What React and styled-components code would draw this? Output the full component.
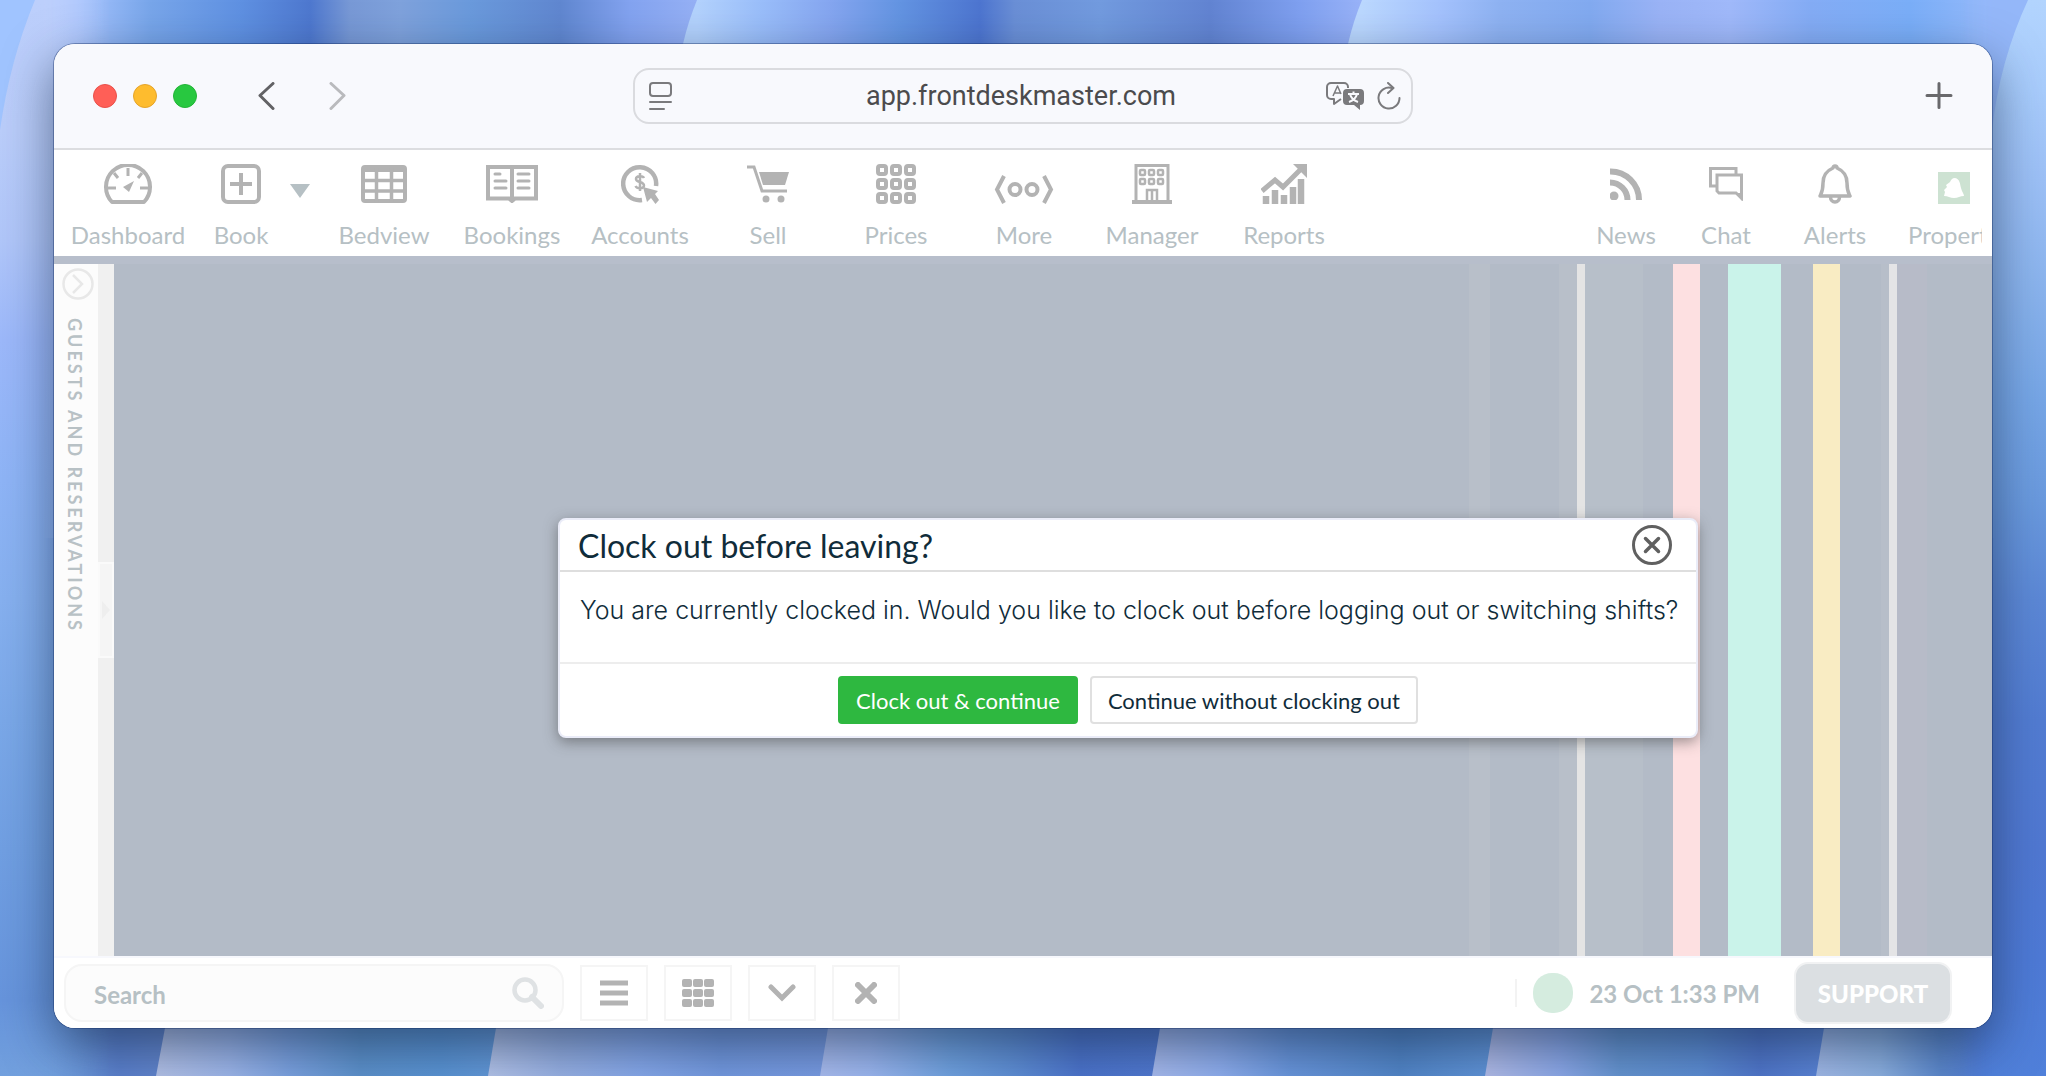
import React from "react";
import styled, { createGlobalStyle } from "styled-components";

const GlobalStyle = createGlobalStyle`
  *, *::before, *::after { box-sizing: border-box; }
  body { margin: 0; font-family: Lato, "Open Sans", sans-serif; }
  button, input { font: inherit; color: inherit; margin: 0; }
  button { padding: 0; border: 0; background: none; cursor: pointer; }
  svg { display: block; }
`;

/* ---------- desktop and window ---------- */

const Desktop = styled.div`
  position: relative;
  isolation: isolate;
  display: flex;
  min-height: 100vh;
  padding: 44px 54px 48px;
  overflow: hidden;
`;

const WallpaperSvg = styled.svg`
  position: absolute;
  inset: 0;
  z-index: -1;
  width: 100%;
  height: 100%;
`;

const Window = styled.main`
  flex: 1;
  min-width: 0;
  display: flex;
  flex-direction: column;
  overflow: hidden;
  border-radius: 21px;
  background: #fff;
  box-shadow: 0 0 0 1px rgba(20, 45, 100, 0.4), 0 18px 50px rgba(20, 40, 70, 0.6);
`;

const WindowBar = styled.header`
  display: grid;
  grid-template-columns: 1fr minmax(300px, 780px) 1fr;
  align-items: center;
  height: 106px;
  padding: 0 39px;
  border-bottom: 2px solid #dcdde0;
  background: #f8f9fd;
`;

const BarLeft = styled.div`
  display: flex;
  align-items: center;
`;

const BarRight = styled.div`
  display: flex;
  justify-content: flex-end;
`;

const Lights = styled.div`
  display: flex;
  gap: 16px;
  margin-right: 60px;
`;

const Light = styled.button`
  width: 24px;
  height: 24px;
  border-radius: 50%;
  border: 1px solid ${(p) => p.$edge};
  background: ${(p) => p.$fill};
`;

const HistoryButtons = styled.div`
  display: flex;
  gap: 54px;
`;

const AddressBar = styled.label`
  display: flex;
  align-items: center;
  gap: 12px;
  height: 56px;
  padding: 0 10px 0 14px;
  border: 2px solid #dadbdf;
  border-radius: 16px;
  color: #7a7a7d;
`;

const AddressInput = styled.input`
  flex: 1;
  min-width: 0;
  padding: 0 0 0 44px;
  border: 0;
  outline: 0;
  background: none;
  text-align: center;
  font-family: Roboto, Inter, sans-serif;
  font-size: 27px;
  color: #4b4b4d;
`;

/* ---------- navigation ---------- */

const Nav = styled.nav`
  display: flex;
  justify-content: space-between;
  height: 106px;
  padding: 0 10px;
  background: #fff;
`;

const NavGroup = styled.div`
  display: flex;
  flex: none;
`;

const ClippedGroup = styled(NavGroup)`
  width: 406px;
  overflow: hidden;
`;

const NavButton = styled.button`
  flex: none;
  display: flex;
  flex-direction: column;
  align-items: center;
  gap: 17px;
  width: ${(p) => p.$width || 128}px;
  padding-top: 14px;
  font-size: 24px;
  line-height: 28px;
  color: #b6c0c4;
`;

const IconBox = styled.span`
  display: flex;
  align-items: center;
  justify-content: center;
  height: 40px;
  color: #b3b3b3;
`;

const Caret = styled.button`
  flex: none;
  align-self: flex-start;
  width: 20px;
  margin: 34px 10px 0 0;
  color: #b6c0c4;
`;

/* ---------- body ---------- */

const NavRule = styled.div`
  height: 8px;
  background: #b7becb;
`;

const Body = styled.div`
  flex: 1;
  display: flex;
  min-height: 480px;
`;

const GuestPanel = styled.aside`
  display: flex;
  flex-direction: column;
  align-items: flex-end;
  gap: 18px;
  width: 44px;
  padding: 4px 4px 0 0;
  background: #fcfcfc;
`;

const PanelTitle = styled.h2`
  margin: 0;
  writing-mode: vertical-rl;
  font-size: 18px;
  line-height: 38px;
  font-weight: 700;
  letter-spacing: 3px;
  text-transform: uppercase;
  color: #b8c1c5;
`;

const Splitter = styled.div`
  display: flex;
  flex-direction: column;
  justify-content: center;
  width: 16px;
  background: #f0f0f0;
`;

const SplitterHandle = styled.button`
  display: flex;
  align-items: center;
  justify-content: center;
  height: 96px;
  border: 2px solid #fafafa;
  background: #f5f5f5;
  color: #eeeeee;
`;

const Stage = styled.section`
  position: relative;
  flex: 1;
  display: grid;
  place-items: center;
  padding: 36px 0 0 150px;
  background: #b3bbc7;
`;

const Stripes = styled.div`
  position: absolute;
  inset: 0;
  display: flex;
  justify-content: flex-end;
  padding-right: 65px;
  overflow: hidden;
`;

const Stripe = styled.span`
  flex: none;
  width: ${(p) => p.$width}px;
  background: ${(p) => p.$color};
`;

/* ---------- dialog ---------- */

const Dialog = styled.div`
  position: relative;
  width: 1140px;
  max-width: 96%;
  border: 2px solid #eaecf8;
  border-radius: 8px;
  background: #fff;
  color: #102c3a;
  box-shadow: 0 4px 14px rgba(60, 60, 60, 0.5);
`;

const DialogHeader = styled.header`
  display: flex;
  align-items: center;
  justify-content: space-between;
  height: 52px;
  padding: 0 24px 0 18px;
  border-bottom: 2px solid #dedede;
`;

const DialogTitle = styled.h1`
  margin: 0;
  padding-top: 2px;
  font-size: 32px;
  line-height: 40px;
  font-weight: 400;
`;

const DialogText = styled.p`
  margin: 0;
  height: 92px;
  padding: 22px 20px 0;
  border-bottom: 2px solid #ededed;
  font-family: Inter, "Liberation Sans", sans-serif;
  font-size: 25px;
  font-weight: 300;
  line-height: 32px;
  white-space: nowrap;
`;

const DialogFooter = styled.footer`
  display: flex;
  justify-content: center;
  gap: 12px;
  padding: 12px;
`;

const DialogButton = styled.button`
  height: 48px;
  padding: 2px 16px 0;
  border: 2px solid ${(p) => (p.$primary ? "#2eb840" : "#e0e0e0")};
  border-radius: 4px;
  background: ${(p) => (p.$primary ? "#2eb840" : "#fff")};
  color: ${(p) => (p.$primary ? "#fff" : "#102c3a")};
  font-size: 22px;
  line-height: 26px;
`;

/* ---------- bottom bar ---------- */

const BottomBar = styled.footer`
  display: flex;
  align-items: center;
  justify-content: space-between;
  height: 72px;
  padding: 0 40px 0 10px;
  border-top: 2px solid #f7f8fd;
  background: #fff;
  font-size: 24px;
  font-weight: 700;
  color: #b6c0c4;
`;

const Tools = styled.div`
  display: flex;
  align-items: center;
  gap: 16px;
`;

const SearchBox = styled.label`
  display: flex;
  align-items: center;
  width: 500px;
  height: 58px;
  padding: 0 18px 0 28px;
  border: 2px solid #f5f5f5;
  border-radius: 18px;
  background: #fcfcfc;
  color: #dfe2e4;
`;

const SearchInput = styled.input`
  flex: 1;
  min-width: 0;
  padding: 2px 0 0;
  border: 0;
  outline: 0;
  background: none;
  &::placeholder { color: #b6c0c4; opacity: 1; }
`;

const ToolButton = styled.button`
  display: flex;
  align-items: center;
  justify-content: center;
  width: 68px;
  height: 56px;
  border: 2px solid #f5f5f5;
  color: #b3b3b3;
`;

const Status = styled.div`
  display: flex;
  align-items: center;
  gap: 16px;
`;

const Divider = styled.span`
  width: 2px;
  height: 28px;
  background: #f3f3f3;
`;

const Presence = styled.span`
  width: 40px;
  height: 40px;
  border-radius: 19px;
  background: #d5ecdf;
`;

const SupportButton = styled.button`
  width: 158px;
  height: 62px;
  margin-left: 18px;
  border: 2px solid #f1f2f3;
  border-radius: 14px;
  background: #dbdfe2;
  color: #fff;
  font-weight: 900;
`;

/* ---------- drawings ---------- */

const stops = (list) =>
  list.map(([offset, color]) => <stop key={offset} offset={offset / 2046} stopColor={color} />);
const tall = (list) =>
  list.map(([offset, color]) => <stop key={offset} offset={offset / 1076} stopColor={color} />);

function Wallpaper() {
  return (
    <WallpaperSvg viewBox="0 0 2046 1076" preserveAspectRatio="none" aria-hidden="true">
      <defs>
        <linearGradient id="top" gradientUnits="userSpaceOnUse" x1="0" y1="0" x2="2046" y2="0">
          {stops([
            [0, "#b9cdfb"], [36, "#bccffc"], [75, "#a9c5ff"], [150, "#78a6ea"], [240, "#5f91e2"],
            [310, "#4e78cf"], [350, "#7899d6"], [400, "#7fa2dc"], [470, "#6a9adc"], [560, "#6087d0"],
            [630, "#83a3f0"], [696, "#95b0f5"],
          ])}
        </linearGradient>
        <linearGradient id="top2" gradientUnits="userSpaceOnUse" x1="0" y1="0" x2="2046" y2="0">
          {stops([
            [697, "#b3d2fd"], [760, "#9abefa"], [830, "#85a6f0"], [900, "#6394e2"], [980, "#4d75d0"],
            [1015, "#6a8fd6"], [1100, "#729bdf"], [1210, "#6284d2"], [1300, "#7fa0f0"], [1361, "#98b2f8"],
          ])}
        </linearGradient>
        <linearGradient id="top3" gradientUnits="userSpaceOnUse" x1="0" y1="0" x2="2046" y2="0">
          {stops([
            [1362, "#bbd8ff"], [1440, "#a4c2fd"], [1500, "#8eb2f2"], [1590, "#82aaf0"], [1660, "#9ab3f6"],
            [1730, "#a0b9fa"], [1810, "#84acf5"], [1910, "#7aaef8"], [1990, "#94b9fa"], [2028, "#a4c4fc"],
          ])}
        </linearGradient>
        {[
          ["b0", 0, [[0, "#79a8e6"], [60, "#6894d8"], [120, "#5b80cc"], [165, "#6285cc"]]],
          ["b1", 0, [[158, "#b4c2e8"], [230, "#9db6ea"], [290, "#7ba2e0"], [360, "#5d92cc"], [440, "#5a94d4"], [492, "#6298d8"]]],
          ["b2", 0, [[489, "#b4c4ea"], [560, "#98b1e4"], [640, "#86a8ea"], [720, "#749ae0"], [825, "#789be2"]]],
          ["b3", 0, [[822, "#aabdf0"], [870, "#9cb7f0"], [950, "#70a2e0"], [1010, "#6090d6"], [1080, "#4c74cc"], [1156, "#5078d0"]]],
          ["b4", 0, [[1153, "#a8bbee"], [1220, "#8faeee"], [1290, "#6996dc"], [1400, "#5286c8"], [1490, "#6094d8"]]],
          ["b5", 0, [[1486, "#b2bce8"], [1560, "#8ca8e8"], [1620, "#6594d0"], [1700, "#5c8cd2"], [1760, "#5076ca"], [1820, "#5a84d6"]]],
          ["b6", 0, [[1817, "#a2bae8"], [1880, "#8cb0e0"], [1940, "#5c88cc"], [1990, "#4e78d2"], [2046, "#5080da"]]],
        ].map(([id, y, list]) => (
          <linearGradient key={id} id={id} gradientUnits="userSpaceOnUse" x1="0" y1={y} x2="2046" y2={y}>
            {stops(list)}
          </linearGradient>
        ))}
        <linearGradient id="west" gradientUnits="userSpaceOnUse" x1="0" y1="0" x2="0" y2="1076">
          {tall([
            [0, "#bccffc"], [130, "#bacdfa"], [240, "#b0c6f9"], [340, "#9cb8fa"], [480, "#8eb4f6"],
            [600, "#86b0ef"], [720, "#7aa8e8"], [850, "#709fe2"], [1000, "#6694dc"], [1076, "#72a0de"],
          ])}
        </linearGradient>
        <linearGradient id="east" gradientUnits="userSpaceOnUse" x1="0" y1="0" x2="0" y2="1076">
          {tall([
            [0, "#b2d4fe"], [90, "#a8ccfc"], [180, "#9cc0f6"], [300, "#88b2ec"], [400, "#76a6e6"],
            [500, "#6a9ade"], [600, "#5c88d6"], [720, "#527cd2"], [850, "#5078d2"], [960, "#4e7ad6"], [1076, "#5080da"],
          ])}
        </linearGradient>
        <linearGradient id="fadeWest" x1="0" x2="1">
          <stop offset="0.4" stopColor="#fff" />
          <stop offset="1" stopColor="#000" />
        </linearGradient>
        <linearGradient id="fadeEast" x1="0" x2="1">
          <stop offset="0" stopColor="#000" />
          <stop offset="0.4" stopColor="#fff" />
        </linearGradient>
        <mask id="maskWest"><rect width="110" height="1076" fill="url(#fadeWest)" /></mask>
        <mask id="maskEast"><rect x="1960" width="86" height="1076" fill="url(#fadeEast)" /></mask>
      </defs>
      <rect width="2046" height="540" fill="url(#top)" />
      <path d="M697 0Q688 22 683 44L640 540H1400V0Z" fill="url(#top2)" />
      <path d="M1362 0Q1353 22 1348 44L1300 540H2046V0Z" fill="url(#top3)" />
      <rect y="538" width="2046" height="538" fill="url(#b0)" />
      <path d="M165 1028L156 1076H2046V538H200Z" fill="url(#b1)" />
      <path d="M496 1028L488 1076H2046V538H540Z" fill="url(#b2)" />
      <path d="M828 1028L820 1076H2046V538H880Z" fill="url(#b3)" />
      <path d="M1160 1028L1152 1076H2046V538H1210Z" fill="url(#b4)" />
      <path d="M1493 1028L1485 1076H2046V538H1540Z" fill="url(#b5)" />
      <path d="M1824 1028L1816 1076H2046V538H1880Z" fill="url(#b6)" />
      <rect width="110" height="1076" fill="url(#west)" mask="url(#maskWest)" />
      <path d="M0 0H35Q10 60 0 130Z" fill="#a0c4ff" />
      <g mask="url(#maskEast)">
        <rect x="1960" width="86" height="1076" fill="url(#east)" />
        <path d="M1960 0H2028Q2000 60 1992 130H1960Z" fill="#94b7f9" />
      </g>
    </WallpaperSvg>
  );
}

const Svg = ({ w, h, children, ...rest }) => (
  <svg width={w} height={h} viewBox={`0 0 ${w} ${h}`} fill="none" stroke="currentColor" aria-hidden="true" {...rest}>
    {children}
  </svg>
);

const DashboardIcon = () => (
  <Svg w={48} h={40} strokeWidth="4">
    <path d="M8 38A22 22 0 1 1 40 38Z" strokeLinejoin="round" />
    <path d="M24 4V12M4 24H12M36 24H44M10 9L14 14M38 9L34 14" strokeWidth="3" />
    <path d="M30 17L25 28L19 23Z" fill="currentColor" stroke="none" />
  </Svg>
);
const BookIcon = () => (
  <Svg w={40} h={40} strokeWidth="4">
    <rect x="2" y="2" width="36" height="36" rx="5" />
    <path d="M20 9V31M9 20H31" />
  </Svg>
);
const BedviewIcon = () => (
  <Svg w={46} h={38} strokeWidth="4">
    <rect x="2" y="2" width="42" height="34" rx="2" />
    <path d="M1 4H45" strokeWidth="6" />
    <path d="M1 15.500H45M1 26H45M15.500 3V37M30.500 3V37" strokeWidth="3.500" />
  </Svg>
);
const BookingsIcon = () => (
  <Svg w={52} h={38} strokeWidth="4">
    <path d="M2 2H50V33.500H29L26 36L23 33.500H2Z" />
    <path d="M26 2V35" />
    <path d="M9 9H14M9 16H20M9 23H20M32 9H43M32 16H43M32 23H43" strokeWidth="3" strokeLinecap="round" />
  </Svg>
);
const AccountsIcon = () => (
  <Svg w={38} h={40} strokeWidth="4.500">
    <path d="M35 22A16.500 16.500 0 1 0 21 36" />
    <path d="M23 14C22 11.500 15 11.500 15 15C15 19 23 17 23 21.500C23 25 16 25 14.500 22M19 9V27" strokeWidth="2.500" />
    <path d="M22 23L37 27L34 30L38 36L34.500 40L30 34L26 38Z" fill="currentColor" stroke="none" />
  </Svg>
);
const SellIcon = () => (
  <Svg w={42} h={38} strokeWidth="3">
    <path d="M0 2H7L15 26H40" />
    <path d="M12 7H42L38 20H16Z" fill="currentColor" stroke="none" />
    <circle cx="19" cy="34" r="3.500" fill="currentColor" stroke="none" />
    <circle cx="34" cy="34" r="3.500" fill="currentColor" stroke="none" />
  </Svg>
);
const PricesIcon = () => (
  <Svg w={40} h={40} strokeWidth="4">
    {[2, 16, 30].map((y) => [2, 16, 30].map((x) => <rect key={`${x}-${y}`} x={x} y={y} width="8" height="8" rx="2" />))}
  </Svg>
);
const MoreIcon = () => (
  <Svg w={60} h={40} strokeWidth="4">
    <path d="M10 12L3 25.500L10 39M50 12L57 25.500L50 39" />
    <circle cx="21" cy="25.500" r="5.500" />
    <circle cx="38" cy="25.500" r="5.500" />
  </Svg>
);
const ManagerIcon = () => (
  <Svg w={40} h={40} strokeWidth="3">
    <path d="M4 36V1.500H36V36" />
    <path d="M0 38H40" strokeWidth="4" />
    {[6, 15].map((y) => [8, 17, 26].map((x) => <rect key={`${x}-${y}`} x={x} y={y} width="5" height="5" rx="1" strokeWidth="2.500" />))}
    <path d="M15 36V26H25V36M20 26V36" strokeWidth="2.500" />
  </Svg>
);
const ReportsIcon = () => (
  <Svg w={46} h={40}>
    <path d="M1 27L14 16L22 23L40 5" strokeWidth="5" />
    <path d="M32 0H46V14Z" fill="currentColor" stroke="none" />
    <path d="M5 40V32M14 40V26M23 40V31M32 40V23M40 40V15" strokeWidth="6.500" />
  </Svg>
);
const NewsIcon = () => (
  <Svg w={32} h={32} strokeWidth="6">
    <circle cx="4" cy="28" r="4.500" fill="currentColor" stroke="none" />
    <path d="M0 14.500A17.500 17.500 0 0 1 17.500 32M0 3.500A28.500 28.500 0 0 1 29 32" />
  </Svg>
);
const ChatIcon = () => (
  <Svg w={34} h={34} strokeWidth="3">
    <path d="M7 19H1.500V1.500H27V7" />
    <path d="M8 8H32.500V31L27 26H10L8 24Z" />
    <path d="M26 26H33V34Z" fill="currentColor" stroke="none" />
  </Svg>
);
const AlertsIcon = () => (
  <Svg w={34} h={40} strokeWidth="3.500">
    <path d="M15 4A2 2 0 0 1 19 4C26 7 29 12 29 19C29 27 30 28 32 32H2C4 28 5 27 5 19C5 12 8 7 15 4Z" strokeLinejoin="round" />
    <path d="M12.500 33A4.500 5 0 0 0 21.500 33" />
  </Svg>
);
const PropertyIcon = () => (
  <Svg w={32} h={40} stroke="none">
    <rect y="8" width="32" height="32" fill="#cde2d2" />
    <path d="M17 14C22 15 22 20 23 24C24 28 26 30 26 32C22 32 20 34 16 34C12 34 10 32 6 32L7 28L6 26L9 23L8 21L12 18C13 16 14 14 17 14Z" fill="#fff" />
  </Svg>
);

const leftNav = [
  ["Bedview", BedviewIcon], ["Bookings", BookingsIcon], ["Accounts", AccountsIcon],
  ["Sell", SellIcon], ["Prices", PricesIcon], ["More", MoreIcon],
  ["Manager", ManagerIcon], ["Reports", ReportsIcon, 136],
];

const rightNav = [
  ["News", NewsIcon, 100], ["Chat", ChatIcon, 100], ["Alerts", AlertsIcon, 118], ["Property", PropertyIcon, 120],
];

const stripes = [
  [21, "#b8bfc9"], [69, "transparent"], [18, "#b8bfc9"], [8, "#e4e4e4"], [58, "#b7bfc9"], [30, "transparent"],
  [27, "#fde0e1"], [28, "transparent"], [53, "#caf3ea"], [32, "transparent"], [27, "#f9ecc3"],
  [41, "transparent"], [8, "#b7bec9"], [8, "#e4e4e6"], [30, "#b7bbc8"],
];

const NavItem = ({ label, icon: Icon, width }) => (
  <NavButton type="button" $width={width}>
    <IconBox><Icon /></IconBox>
    {label}
  </NavButton>
);

export default function App() {
  return (
    <Desktop>
      <GlobalStyle />
      <Wallpaper />
      <Window>
        <WindowBar>
          <BarLeft>
            <Lights>
              <Light type="button" aria-label="Close window" $fill="#ff5f57" $edge="#e9504a" />
              <Light type="button" aria-label="Minimise window" $fill="#febc2e" $edge="#e5a42a" />
              <Light type="button" aria-label="Zoom window" $fill="#28c840" $edge="#22b436" />
            </Lights>
            <HistoryButtons>
              <button type="button" aria-label="Back">
                <Svg w={18} h={28} strokeWidth="3" strokeLinecap="round" strokeLinejoin="round" color="#626265">
                  <path d="M16 1.500L3 13.500L16 26.500" />
                </Svg>
              </button>
              <button type="button" aria-label="Forward">
                <Svg w={18} h={28} strokeWidth="3" strokeLinecap="round" strokeLinejoin="round" color="#b9babd">
                  <path d="M2 1.500L15 13.500L2 26.500" />
                </Svg>
              </button>
            </HistoryButtons>
          </BarLeft>
          <AddressBar>
            <Svg w={23} h={28} strokeWidth="2" strokeLinecap="round">
              <rect x="1" y="1" width="21" height="13" rx="3" />
              <path d="M1 20H22M1 27H15" />
            </Svg>
            <AddressInput aria-label="Address" defaultValue="app.frontdeskmaster.com" />
            <Svg w={39} h={29} strokeWidth="2" strokeLinejoin="round">
              <path d="M15 17L8 22V17H5A4 4 0 0 1 1 13V5A4 4 0 0 1 5 1H18A4 4 0 0 1 22 5V6" />
              <path d="M7 14L11.500 4L15 12M8.500 11H14" strokeWidth="1.500" />
              <path d="M21 7H34A4 4 0 0 1 38 11V19A4 4 0 0 1 34 23V28L28 23H21A4 4 0 0 1 17 19V11A4 4 0 0 1 21 7Z" fill="currentColor" stroke="none" />
              <path d="M22 12H33M27.500 9.500V12M24 12C25 16 29 19 32 20M31 12C30 16 26 19 23 20" stroke="#f8f9fd" strokeWidth="2" />
            </Svg>
            <Svg w={24} h={28} strokeWidth="2" strokeLinecap="round" strokeLinejoin="round">
              <path d="M15 6A10.500 10.500 0 1 0 22.500 16" />
              <path d="M11 1L16.500 6L11 11" />
            </Svg>
          </AddressBar>
          <BarRight>
            <button type="button" aria-label="New tab">
              <Svg w={28} h={28} strokeWidth="3" strokeLinecap="round" color="#69696c">
                <path d="M14 1.500V25.500M2 13.500H26" />
              </Svg>
            </button>
          </BarRight>
        </WindowBar>

        <Nav>
          <NavGroup>
            <NavItem label="Dashboard" icon={DashboardIcon} />
            <NavItem label="Book" icon={BookIcon} width={98} />
            <Caret type="button" aria-label="Book options">
              <Svg w={20} h={14} stroke="none">
                <path d="M0 0H20L10 14Z" fill="currentColor" />
              </Svg>
            </Caret>
            {leftNav.map(([label, icon, width]) => (
              <NavItem key={label} label={label} icon={icon} width={width} />
            ))}
          </NavGroup>
          <ClippedGroup>
            {rightNav.map(([label, icon, width]) => (
              <NavItem key={label} label={label} icon={icon} width={width} />
            ))}
          </ClippedGroup>
        </Nav>
        <NavRule />

        <Body>
          <GuestPanel>
            <button type="button" aria-label="Expand guests and reservations">
              <Svg w={32} h={32} strokeWidth="2.500" color="#e8e8e8">
                <circle cx="16" cy="16" r="14.500" />
                <path d="M11 7L20 16L11 25" />
              </Svg>
            </button>
            <PanelTitle>Guests and reservations</PanelTitle>
          </GuestPanel>
          <Splitter>
            <SplitterHandle type="button" aria-label="Resize panel">
              <Svg w={8} h={18} stroke="none">
                <path d="M0 0L8 9L0 18Z" fill="currentColor" />
              </Svg>
            </SplitterHandle>
          </Splitter>
          <Stage>
            <Stripes aria-hidden="true">
              {stripes.map(([width, color], i) => (
                <Stripe key={i} $width={width} $color={color} />
              ))}
            </Stripes>
            <Dialog role="dialog" aria-labelledby="dialog-title">
              <DialogHeader>
                <DialogTitle id="dialog-title">Clock out before leaving?</DialogTitle>
                <button type="button" aria-label="Close">
                  <Svg w={40} h={40} strokeWidth="3" color="#606060">
                    <circle cx="20" cy="20" r="18.500" />
                    <path d="M13.500 13.500L26.500 26.500M26.500 13.500L13.500 26.500" strokeWidth="3.500" strokeLinecap="round" />
                  </Svg>
                </button>
              </DialogHeader>
              <DialogText>
                You are currently clocked in. Would you like to clock out before logging out or switching shifts?
              </DialogText>
              <DialogFooter>
                <DialogButton type="button" $primary>Clock out &amp; continue</DialogButton>
                <DialogButton type="button">Continue without clocking out</DialogButton>
              </DialogFooter>
            </Dialog>
          </Stage>
        </Body>

        <BottomBar>
          <Tools>
            <SearchBox>
              <SearchInput type="text" placeholder="Search" aria-label="Search" />
              <Svg w={32} h={32} strokeWidth="4.500">
                <circle cx="13" cy="13" r="10.500" />
                <path d="M20 20L29 29" strokeWidth="6" strokeLinecap="round" />
              </Svg>
            </SearchBox>
            <ToolButton type="button" aria-label="List view">
              <Svg w={28} h={26} strokeWidth="5">
                <path d="M0 3H28M0 13H28M0 23H28" />
              </Svg>
            </ToolButton>
            <ToolButton type="button" aria-label="Grid view">
              <Svg w={32} h={28} stroke="none">
                {[0, 10, 20].map((y) => [0, 11, 22].map((x) => (
                  <rect key={`${x}-${y}`} x={x} y={y} width="10" height="8" rx="2" fill="currentColor" />
                )))}
              </Svg>
            </ToolButton>
            <ToolButton type="button" aria-label="Collapse">
              <Svg w={28} h={18} strokeWidth="5" strokeLinecap="round">
                <path d="M3 3L14 14L25 3" />
              </Svg>
            </ToolButton>
            <ToolButton type="button" aria-label="Clear">
              <Svg w={22} h={22} strokeWidth="6" strokeLinecap="round">
                <path d="M3 3L19 19M19 3L3 19" />
              </Svg>
            </ToolButton>
          </Tools>
          <Status>
            <Divider />
            <Presence />
            <time>23 Oct 1:33 PM</time>
            <SupportButton type="button">SUPPORT</SupportButton>
          </Status>
        </BottomBar>
      </Window>
    </Desktop>
  );
}
